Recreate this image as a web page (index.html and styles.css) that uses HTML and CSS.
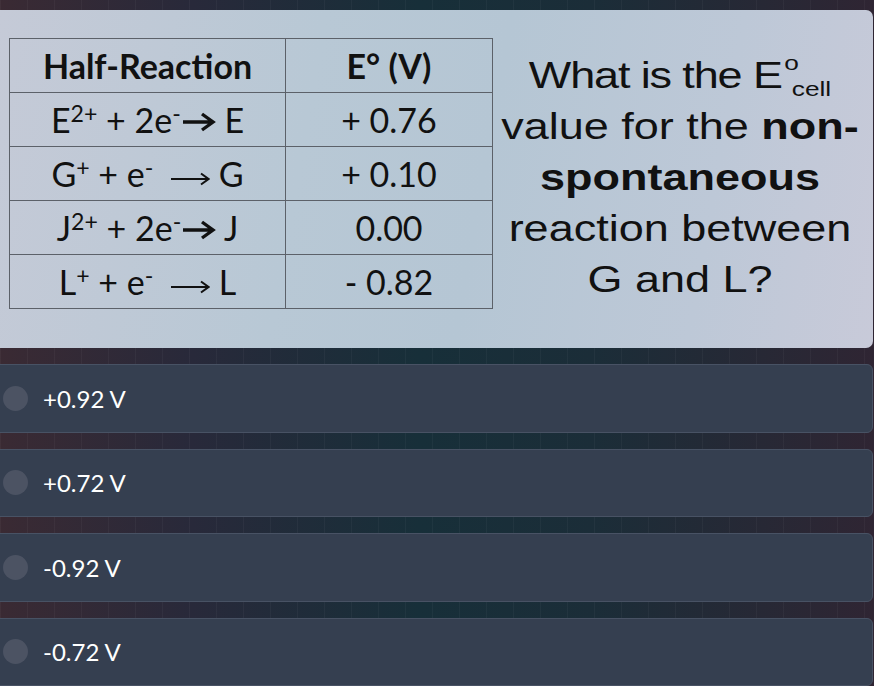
FILE: index.html
```html
<!DOCTYPE html>
<html>
<head>
<meta charset="utf-8">
<link rel="stylesheet" href="styles.css">
</head>
<body>
<div class="page">
  <div class="question">
    <table class="rx">
      <tr><th class="c1">Half-Reaction</th><th class="c2">E° (V)</th></tr>
      <tr><td>E<sup>2+</sup> + 2e<sup>-</sup><svg class="arr bold" viewBox="0 0 34 20"><path d="M1 10 H31 M20 2 L31 10 L20 18"/></svg> E</td><td>+ 0.76</td></tr>
      <tr><td>G<sup>+</sup> + e<sup>-</sup> <svg class="arr thin" viewBox="0 0 40 16"><path d="M1 8 H38 M31 2.5 L38.5 8 L31 13.5"/></svg> G</td><td>+ 0.10</td></tr>
      <tr><td>J<sup>2+</sup> + 2e<sup>-</sup><svg class="arr bold" viewBox="0 0 34 20"><path d="M1 10 H31 M20 2 L31 10 L20 18"/></svg> J</td><td>0.00</td></tr>
      <tr><td>L<sup>+</sup> + e<sup>-</sup> <svg class="arr thin" viewBox="0 0 40 16"><path d="M1 8 H38 M31 2.5 L38.5 8 L31 13.5"/></svg> L</td><td>- 0.82</td></tr>
    </table>
    <div class="qcol">
      <p class="qtext"><span class="tight">What is the E</span><span class="stack"><span class="deg">o</span><span class="sub">cell</span></span><br>value for the <b>non-</b><br><b>spontaneous</b><br>reaction between<br>G and L?</p>
    </div>
  </div>
  <div class="options">
    <div class="opt"><span class="radio"></span><span class="label">+0.92 V</span></div>
    <div class="opt"><span class="radio"></span><span class="label">+0.72 V</span></div>
    <div class="opt"><span class="radio"></span><span class="label">-0.92 V</span></div>
    <div class="opt"><span class="radio"></span><span class="label">-0.72 V</span></div>
  </div>
</div>
</body>
</html>
```
FILE: styles.css
```css
html, body {
  margin: 0;
  height: 686px;
  overflow: hidden;
}
body {
  font-family: Lato, "Noto Sans", sans-serif;
  background-color: #1d2c36;
  background-image:
    repeating-linear-gradient(90deg, rgba(255,255,255,0.035) 0 1px, transparent 1px 27px),
    linear-gradient(90deg, #3a2a33 0%, #28293a 22%, #172f39 48%, #1b2d38 68%, #2f2533 100%);
}
.page {
  padding-top: 10px;
}
.question {
  display: flex;
  align-items: flex-start;
  width: 873px;
  height: 338px;
  box-sizing: border-box;
  padding-left: 9px;
  border-radius: 0 7px 7px 0;
  background: linear-gradient(100deg, #c5cad7 0%, #b8c8d5 35%, #b5c6d4 55%, #bdc8d7 80%, #c8cad9 100%);
}
.rx {
  margin-top: 28px;
  border-collapse: collapse;
  width: 484px;
  color: #111;
  font-size: 34px;
  border: 1px solid #5c6169;
}
.rx th, .rx td {
  border: 1px solid #5c6169;
  height: 53px;
  padding: 0;
  text-align: center;
  vertical-align: middle;
  line-height: 1;
  white-space: nowrap;
}
.rx th {
  font-weight: 700;
}
.rx .c1 { width: 275px; }
.rx sup {
  font-size: 0.68em;
  vertical-align: 0.46em;
  line-height: 0;
}
.arr {
  fill: none;
  stroke: #111;
}
.arr.bold {
  width: 34px;
  height: 20px;
  stroke-width: 3.4;
  vertical-align: 1px;
  margin-left: 1px;
}
.arr.thin {
  width: 40px;
  height: 16px;
  stroke-width: 2;
  vertical-align: 0;
  margin-left: 8px;
}
.qcol {
  flex: 1;
  padding-top: 37px;
  padding-right: 6px;
}
.qtext {
  margin: 0;
  font-family: "Liberation Sans", Arial, sans-serif;
  font-size: 36px;
  line-height: 51px;
  color: #111;
  text-align: center;
  transform: scaleX(1.25);
}
.tight {
  letter-spacing: -0.9px;
}
.stack {
  display: inline-block;
  vertical-align: -8px;
  font-size: 21px;
  text-align: left;
}
.deg {
  display: block;
  line-height: 32px;
  margin-left: 2px;
}
.sub {
  display: block;
  line-height: 20px;
  margin-left: 8px;
}
.options {
  display: flex;
  flex-direction: column;
  gap: 16px;
  margin: 16px 1px 0 -10px;
}
.opt {
  display: flex;
  align-items: center;
  gap: 15px;
  height: 68.5px;
  box-sizing: border-box;
  padding-left: 12px;
  background: #353f50;
  border: 1px solid #485264;
  border-radius: 6px;
}
.radio {
  width: 25px;
  height: 25px;
  border-radius: 50%;
  background: #4c5363;
  flex: none;
}
.label {
  color: #fff;
  font-size: 24px;
}
```
